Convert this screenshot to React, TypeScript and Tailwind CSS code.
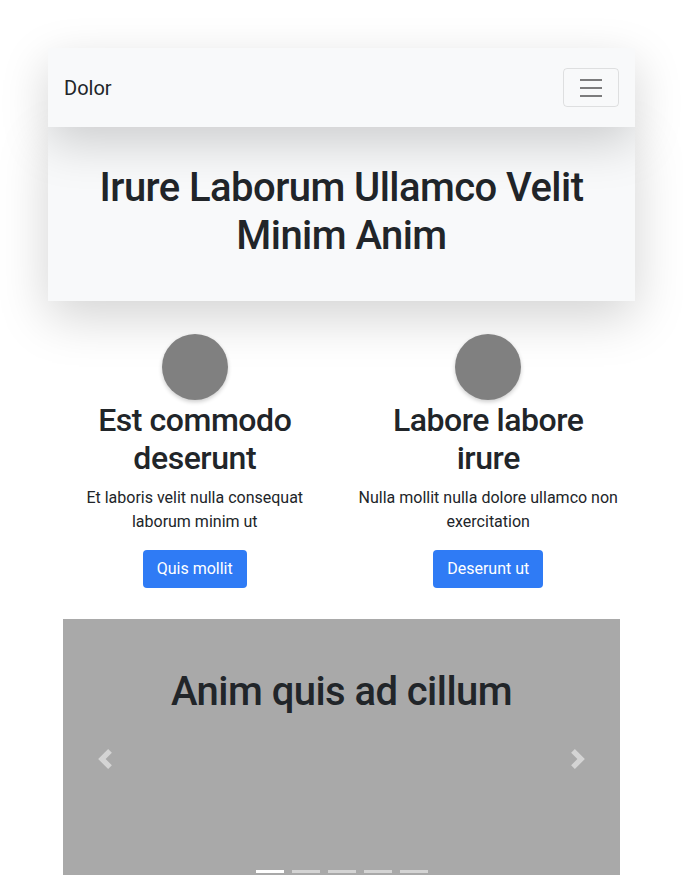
import React from 'react';

const features = [
  { title: 'Est commodo deserunt', text: 'Et laboris velit nulla consequat laborum minim ut', cta: 'Quis mollit' },
  { title: 'Labore labore irure', text: 'Nulla mollit nulla dolore ullamco non exercitation', cta: 'Deserunt ut' },
];

const Chevron = ({ dir }: { dir: 'left' | 'right' }) => (
  <svg width="20" height="20" viewBox="0 0 8 8" fill="#fff">
    {dir === 'left' ? (
      <path d="M5.25 0l-4 4 4 4 1.5-1.5L4.25 4l2.5-2.5L5.25 0z" />
    ) : (
      <path d="M2.75 0l-1.5 1.5L3.75 4l-2.5 2.5L2.75 8l4-4-4-4z" />
    )}
  </svg>
);

export default function App() {
  return (
    <div className="min-h-screen bg-white pt-12 text-[#212529] font-['Roboto','Helvetica',sans-serif]">
      <div className="mx-auto w-[587px]">
        {/* Navbar */}
        <nav className="relative z-10 flex h-[79px] items-center justify-between bg-[#f8f9fa] px-4 shadow-[0_1rem_3rem_rgba(0,0,0,0.175)]">
          <span className="text-[20px] leading-[30px]">Dolor</span>
          <button className="flex h-[39px] w-[56px] items-center justify-center rounded border border-black/10">
            <svg width="30" height="30" viewBox="0 0 30 30">
              <path d="M4 7h22M4 15h22M4 23h22" stroke="rgba(0,0,0,0.5)" strokeWidth="2" />
            </svg>
          </button>
        </nav>

        {/* Hero */}
        <header className="bg-[#f8f9fa] pt-[37px] pb-[41px] text-center shadow-[0_1rem_3rem_rgba(0,0,0,0.175)]">
          <h1 className="mx-auto max-w-[500px] text-[40px] font-medium leading-[48px] tracking-[-0.014em]">Irure Laborum Ullamco Velit Minim Anim</h1>
        </header>

        {/* Features */}
        <section className="mt-[33px] grid grid-cols-2">
          {features.map((f) => (
            <div key={f.title} className="flex flex-col items-center px-[15px] text-center">
              <div className="h-[66px] w-[66px] rounded-full bg-[#808080] shadow-[0_0.125rem_0.25rem_rgba(0,0,0,0.2)]" />
              <h2 className="mt-[1px] mb-2 px-6 text-[32px] font-medium leading-[38.4px] tracking-[-0.014em]">{f.title}</h2>
              <p className="mb-4 text-[16px] leading-6">{f.text}</p>
              <button className="h-[38px] rounded bg-[#2f7bf5] px-[14px] text-[16px] text-white">{f.cta}</button>
            </div>
          ))}
        </section>

        {/* Carousel */}
        <div className="relative mx-[15px] mt-[31px] h-[280px] bg-[#a9a9a9] pt-[49px] text-center">
          <h3 className="text-[40px] font-medium leading-[48px] tracking-[-0.014em]">Anim quis ad cillum</h3>
          <div className="absolute inset-y-0 left-0 flex w-[15%] items-center justify-center opacity-50">
            <Chevron dir="left" />
          </div>
          <div className="absolute inset-y-0 right-0 flex w-[15%] items-center justify-center opacity-50">
            <Chevron dir="right" />
          </div>
          <div className="absolute inset-x-0 bottom-[26px] flex justify-center gap-2">
            {[0, 1, 2, 3, 4].map((i) => (
              <span key={i} className={`h-[3px] w-[28px] ${i === 0 ? 'bg-white' : 'bg-white/50'}`} />
            ))}
          </div>
        </div>
      </div>
    </div>
  );
}
